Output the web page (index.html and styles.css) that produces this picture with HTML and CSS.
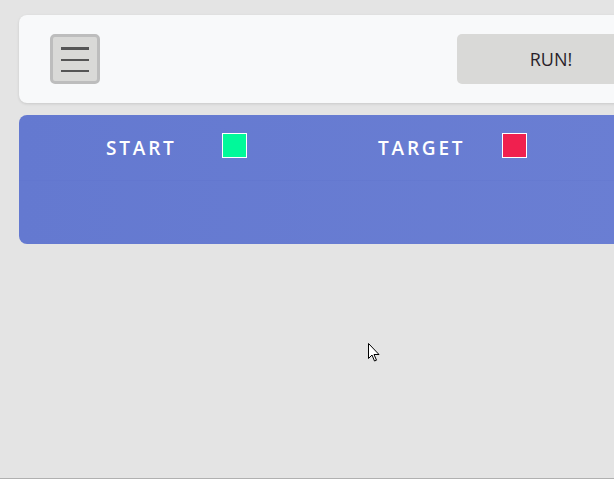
FILE: index.html
```html
<!DOCTYPE html>
<html>
<head>
<meta charset="utf-8">
<link rel="stylesheet" href="styles.css">
</head>
<body>
<div class="page">
  <header class="toolbar">
    <button class="menu-btn" aria-label="menu">
      <span class="bar"></span><span class="bar"></span><span class="bar"></span>
    </button>
    <button class="run-btn">RUN!</button>
  </header>
  <section class="panel">
    <div class="legend">
      <div class="legend-item start-item">
        <span class="legend-label">START</span>
        <span class="swatch swatch-start"></span>
      </div>
      <div class="legend-item target-item">
        <span class="legend-label">TARGET</span>
        <span class="swatch swatch-target"></span>
      </div>
    </div>
  </section>
</div>
<div class="bottom-line"></div>
<svg class="cursor" width="13" height="20" viewBox="0 0 13 20">
  <path d="M0.5 0.5 L0.5 15.5 L4 12 L6.5 18 L8.5 17.2 L6 11.5 L11 11.5 Z" fill="#fff" stroke="#000" stroke-width="1"/>
</svg>
</body>
</html>
```

FILE: styles.css
```css
* { box-sizing: border-box; }
html, body { margin: 0; padding: 0; }
body {
  width: 614px;
  height: 479px;
  overflow: hidden;
  background: #e4e4e4;
  font-family: "Open Sans", "Liberation Sans", sans-serif;
  position: relative;
}
.page {
  padding: 15px 0 0 19px;
  width: 614px;
  overflow: hidden;
}
.toolbar {
  height: 88px;
  width: 830px;
  background: #f8f9fa;
  border-radius: 8px;
  box-shadow: 0 1px 3px rgba(0,0,0,0.12);
  display: flex;
  align-items: center;
  padding: 0 0 0 31px;
}
.menu-btn {
  width: 50px;
  height: 50px;
  background: #d9d9d7;
  border: 3px solid #bdbdbd;
  border-radius: 5px;
  padding: 0;
  display: flex;
  flex-direction: column;
  align-items: center;
  justify-content: center;
  gap: 9px;
}
.bar {
  display: block;
  width: 28px;
  height: 2px;
  background: #555;
}
.menu-btn .bar:first-child { height: 3px; }
.run-btn {
  margin-left: 357px;
  width: 188px;
  height: 50px;
  background: #d9d9d7;
  border: none;
  border-radius: 5px;
  font-family: "Open Sans", "Liberation Sans", sans-serif;
  font-size: 18px;
  color: #2a1f2a;
  padding: 0;
}
.panel {
  margin-top: 12px;
  height: 129px;
  width: 830px;
  border-radius: 8px;
  background: linear-gradient(90deg, #6479d0 0%, #6c80d4 100%);
}
.legend {
  height: 66px;
  display: flex;
  border-bottom: 1px solid rgba(90,110,200,0.15);
}
.legend-item {
  display: flex;
  align-items: flex-start;
  padding-top: 18px;
}
.start-item { padding-left: 87px; width: 359px; }
.legend-label {
  color: #fff;
  font-weight: 600;
  font-size: 19px;
  letter-spacing: 2.8px;
  line-height: 30px;
  margin-top: 0;
}
.start-item .legend-label { width: 116px; }
.target-item .legend-label { width: 124px; }
.swatch {
  width: 25px;
  height: 25px;
  border: 1px solid #fff;
}
.swatch-start { background: #00f99a; }
.swatch-target { background: #f0204f; }
.bottom-line {
  position: absolute;
  left: 0;
  right: 0;
  bottom: 0;
  height: 1px;
  background: #b0b0b0;
}
.cursor {
  position: absolute;
  left: 368px;
  top: 343px;
}
```
